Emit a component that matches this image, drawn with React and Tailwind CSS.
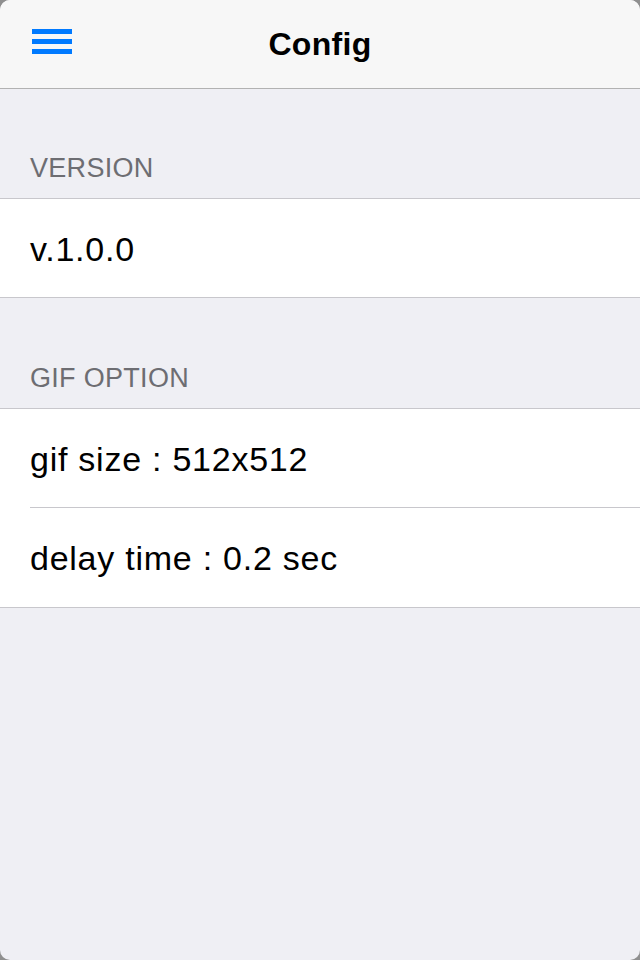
import React from 'react';

const font = { fontFamily: '"Helvetica Neue", "Liberation Sans", Arial, sans-serif' };

function SectionHeader({ title, top }) {
  return (
    <div className={`px-[30px] ${top} pb-[14px] text-[27px] leading-[32px] tracking-[0.3px] text-[#6d6d72]`}>
      {title}
    </div>
  );
}

function Row({ children, last, tall }) {
  return (
    <div className="pl-[30px] bg-white">
      <div
        className={`flex items-center pt-[2px] text-[34px] tracking-[0.75px] text-black ${
          last ? (tall ? 'h-[99px]' : 'h-[98px]') : 'h-[99px] border-b border-[#c8c7cc]'
        }`}
      >
        {children}
      </div>
    </div>
  );
}

export default function App() {
  return (
    <div className="w-[640px] h-[960px] bg-[#8f8f8f]" style={font}>
      <div className="w-full h-full rounded-[10px] overflow-hidden bg-[#efeff4] flex flex-col">
        {/* nav bar */}
        <div className="h-[89px] bg-[#f7f7f7] border-b border-[#b2b2b2] relative flex items-center justify-center shrink-0">
          <div className="absolute left-[32px] top-[29px] w-[40px] flex flex-col gap-[5px]">
            <div className="h-[5px] bg-[#007aff]"></div>
            <div className="h-[5px] bg-[#007aff]"></div>
            <div className="h-[5px] bg-[#007aff]"></div>
          </div>
          <h1 className="text-[32px] font-bold text-black tracking-[0.3px]">Config</h1>
        </div>

        <SectionHeader title="VERSION" top="pt-[63px]" />
        <div className="border-y border-[#c8c7cc]">
          <Row last>v.1.0.0</Row>
        </div>

        <SectionHeader title="GIF OPTION" top="pt-[64px]" />
        <div className="border-y border-[#c8c7cc]">
          <Row>gif size : 512x512</Row>
          <Row last tall>delay time : 0.2 sec</Row>
        </div>
      </div>
    </div>
  );
}
